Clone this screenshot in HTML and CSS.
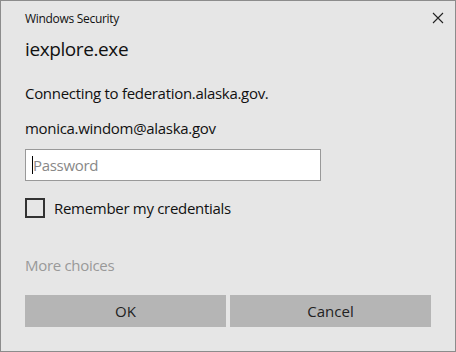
FILE: index.html
```html
<!DOCTYPE html>
<html lang="en">
<head>
  <meta charset="UTF-8" />
  <title>Windows Security</title>
  <link rel="stylesheet" href="styles.css">
</head>
<body>
  <div class="dlg">
    <div class="titlebar">
      <span class="caption">Windows Security</span>
      <svg class="close" width="12" height="12" viewBox="0 0 12 12"><path d="M1 1L11 11M11 1L1 11" stroke="#222" stroke-width="1.1"/></svg>
    </div>
    <div class="app">iexplore.exe</div>
    <p class="msg">Connecting to federation.alaska.gov.</p>
    <p class="user">monica.windom@alaska.gov</p>
    <div class="pwd"><span class="caret"></span><span class="ph">Password</span></div>
    <label class="remember"><span class="box"></span>Remember my credentials</label>
    <div class="more">More choices</div>
    <div class="btns">
      <button>OK</button>
      <button>Cancel</button>
    </div>
  </div>
</body>
</html>
```

FILE: styles.css
```css
html,body{margin:0;padding:0}
body{font-family:"Segoe UI","Open Sans","Noto Sans",sans-serif;color:#111;letter-spacing:-0.3px}
.dlg{height:350px;border:1px solid #8c8c8c;background:#e6e6e6;padding:0 0 0 24px;width:430px}
.titlebar{display:flex;justify-content:space-between;align-items:center;height:34px;padding-right:11px}
.caption{font-size:12px}
.close{display:block}
.app{font-size:19px;line-height:28px;letter-spacing:-0.4px}
.msg,.user{margin:0;font-size:15px;line-height:20px}
.msg{margin-top:20px}
.user{margin-top:15px}
.pwd{margin-top:11px;height:30px;border:1px solid #999;background:#fff;display:flex;align-items:center;padding-left:6px;width:288px}
.caret{width:1px;height:18px;background:#000}
.ph{color:#888;font-size:15px}
.remember{display:flex;align-items:center;margin-top:17px;font-size:15px}
.box{width:16px;height:16px;border:2px solid #333;margin-right:9px}
.more{margin-top:37px;font-size:15px;color:#999}
.btns{display:flex;gap:4px;margin-top:20px}
button{width:201px;height:32px;border:none;background:#b5b5b5;font:inherit;font-size:15px;color:#222;padding:0}
```
